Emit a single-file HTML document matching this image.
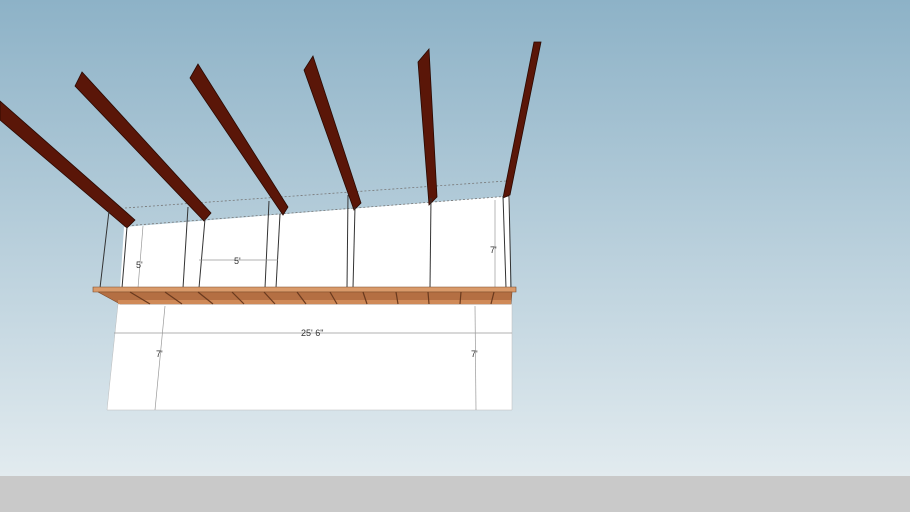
<!DOCTYPE html>
<html><head><style>html,body{margin:0;padding:0;width:910px;height:512px;overflow:hidden}</style></head>
<body>
<svg width="910" height="512" viewBox="0 0 910 512" xmlns="http://www.w3.org/2000/svg" font-family="Liberation Sans, sans-serif">
<defs>
<linearGradient id="sky" x1="0" y1="0" x2="0" y2="1">
<stop offset="0" stop-color="#8db2c7"/>
<stop offset="1" stop-color="#e2ebef"/>
</linearGradient>
</defs>
<rect width="910" height="476" fill="url(#sky)"/>
<rect y="476" width="910" height="36" fill="#c9c9c9"/>
<polygon points="124,227 510,196 510,289 120,289" fill="#fff"/>
<line x1="125" y1="208" x2="506" y2="181" stroke="#777" stroke-width="0.8" stroke-dasharray="2,2"/>
<line x1="124" y1="226" x2="510" y2="196" stroke="#777" stroke-width="0.8" stroke-dasharray="2,2"/>
<g stroke-linejoin="miter">
<polygon points="0,101 0,120 127,228 135,220" fill="#5a1608" stroke="#2a0800" stroke-width="0.8"/>
<polygon points="82,72 75,86 204,221 211,213" fill="#5a1608" stroke="#2a0800" stroke-width="0.8"/>
<polygon points="198,64 190,78 283,215 288,207" fill="#5a1608" stroke="#2a0800" stroke-width="0.8"/>
<polygon points="313,56 304,70 354,210 361,203" fill="#5a1608" stroke="#2a0800" stroke-width="0.8"/>
<polygon points="429,49 418,62 429,205 437,197" fill="#5a1608" stroke="#2a0800" stroke-width="0.8"/>
<polygon points="541,42 534,42 503,198 510,195" fill="#5a1608" stroke="#2a0800" stroke-width="0.8"/>
</g>
<g stroke="#333" stroke-width="1">
<line x1="109" y1="211" x2="100" y2="288"/>
<line x1="127" y1="227" x2="122" y2="288"/>
<line x1="188" y1="207" x2="183" y2="288"/>
<line x1="205" y1="219" x2="199" y2="288"/>
<line x1="269" y1="201" x2="265" y2="288"/>
<line x1="280" y1="214" x2="276" y2="288"/>
<line x1="348" y1="195" x2="347" y2="288"/>
<line x1="355" y1="207" x2="353" y2="288"/>
<line x1="431" y1="198" x2="430" y2="288"/>
<line x1="503" y1="196" x2="506" y2="288"/>
<line x1="509" y1="196" x2="511" y2="288"/>
</g>
<g stroke="#999" stroke-width="0.7" fill="none">
<line x1="143" y1="226" x2="138" y2="288"/>
<line x1="199" y1="260" x2="278" y2="260"/>
<line x1="495" y1="200" x2="495" y2="288"/>
</g>
<g font-size="9" fill="#333">
<text x="136" y="268">5'</text>
<text x="234" y="264">5'</text>
<text x="490" y="253">7'</text>
</g>
<polygon points="118,304 512,304 512,410 107,410" fill="#fff" stroke="#bbb" stroke-width="0.5"/>
<polygon points="93,287 516,287 516,292 93,292" fill="#d99a6a" stroke="#7a4a2a" stroke-width="0.6"/>
<polygon points="98,292 512,292 511,304 120,304" fill="#b46f43" stroke="#7a4a2a" stroke-width="0.6"/>
<rect x="118" y="300" width="393" height="4" fill="#d08a58"/>
<g stroke="#6a3a1e" stroke-width="1.2">
<line x1="130" y1="292" x2="150" y2="304"/>
<line x1="165" y1="292" x2="182" y2="304"/>
<line x1="198" y1="292" x2="213" y2="304"/>
<line x1="232" y1="292" x2="244" y2="304"/>
<line x1="264" y1="292" x2="275" y2="304"/>
<line x1="297" y1="292" x2="306" y2="304"/>
<line x1="330" y1="292" x2="337" y2="304"/>
<line x1="363" y1="292" x2="367" y2="304"/>
<line x1="396" y1="292" x2="398" y2="304"/>
<line x1="428" y1="292" x2="429" y2="304"/>
<line x1="461" y1="292" x2="460" y2="304"/>
<line x1="494" y1="292" x2="491" y2="304"/>
</g>
<g stroke="#999" stroke-width="0.7" fill="none">
<line x1="114" y1="333" x2="512" y2="333"/>
<line x1="165" y1="306" x2="155" y2="410"/>
<line x1="475" y1="306" x2="476" y2="410"/>
</g>
<g font-size="9" fill="#333">
<text x="301" y="336">25' 6"</text>
<text x="156" y="357">7'</text>
<text x="471" y="357">7'</text>
</g>
</svg>
</body></html>
